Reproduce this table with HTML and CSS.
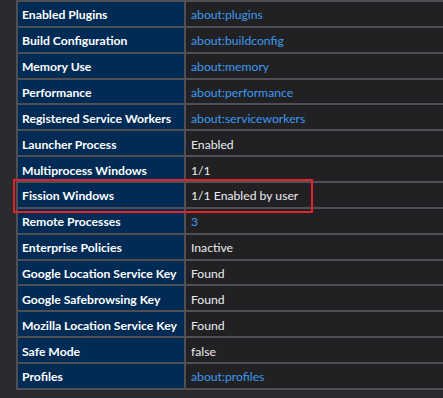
FILE: index.html
```html
<!DOCTYPE html>
<html lang="en">
<head>
<meta charset="utf-8">
<title>Troubleshooting Information</title>
<link rel="stylesheet" href="styles.css">
</head>
<body>
  <main class="page">
    <div class="info-grid">
      <div class="key">Enabled Plugins</div><div class="val"><a href="#">about:plugins</a></div>
      <div class="key">Build Configuration</div><div class="val"><a href="#">about:buildconfig</a></div>
      <div class="key">Memory Use</div><div class="val"><a href="#">about:memory</a></div>
      <div class="key">Performance</div><div class="val"><a href="#">about:performance</a></div>
      <div class="key">Registered Service Workers</div><div class="val"><a href="#">about:serviceworkers</a></div>
      <div class="key">Launcher Process</div><div class="val">Enabled</div>
      <div class="key">Multiprocess Windows</div><div class="val">1/1</div>
      <div class="key">Fission Windows</div><div class="val">1/1 Enabled by user</div>
      <div class="key">Remote Processes</div><div class="val"><a href="#">3</a></div>
      <div class="key">Enterprise Policies</div><div class="val">Inactive</div>
      <div class="key">Google Location Service Key</div><div class="val">Found</div>
      <div class="key">Google Safebrowsing Key</div><div class="val">Found</div>
      <div class="key">Mozilla Location Service Key</div><div class="val">Found</div>
      <div class="key">Safe Mode</div><div class="val">false</div>
      <div class="key">Profiles</div><div class="val"><a href="#">about:profiles</a></div>
    </div>
    <div class="highlight"></div>
  </main>
</body>
</html>
```
FILE: styles.css
```css
html, body {
  margin: 0;
  padding: 0;
  background: #2a2a2e;
  overflow: hidden;
}

.page {
  position: relative;
  padding-left: 16px;
  font-family: "Lato", "Open Sans", sans-serif;
  font-size: 12.2px;
}

.info-grid {
  display: grid;
  grid-template-columns: 166px 1fr;
  grid-auto-rows: 23.87px;
  gap: 2px;
  padding: 2px 0 2px 2px;
  background: #4f4f55;
}

.key,
.val {
  display: flex;
  align-items: center;
  padding-top: 2px;
  white-space: nowrap;
  overflow: hidden;
}

.key {
  background: #002b55;
  color: #ffffff;
  font-weight: 700;
  padding-left: 4px;
}

.val {
  background: #212124;
  color: #ececf0;
  padding-left: 5px;
}

.val a {
  color: #3d9af0;
  text-decoration: none;
}

/* red outline drawn over the Fission Windows row */
.highlight {
  position: absolute;
  left: 13px;
  top: 179px;
  width: 296px;
  height: 30px;
  border: 2px solid #e3222b;
}
```
